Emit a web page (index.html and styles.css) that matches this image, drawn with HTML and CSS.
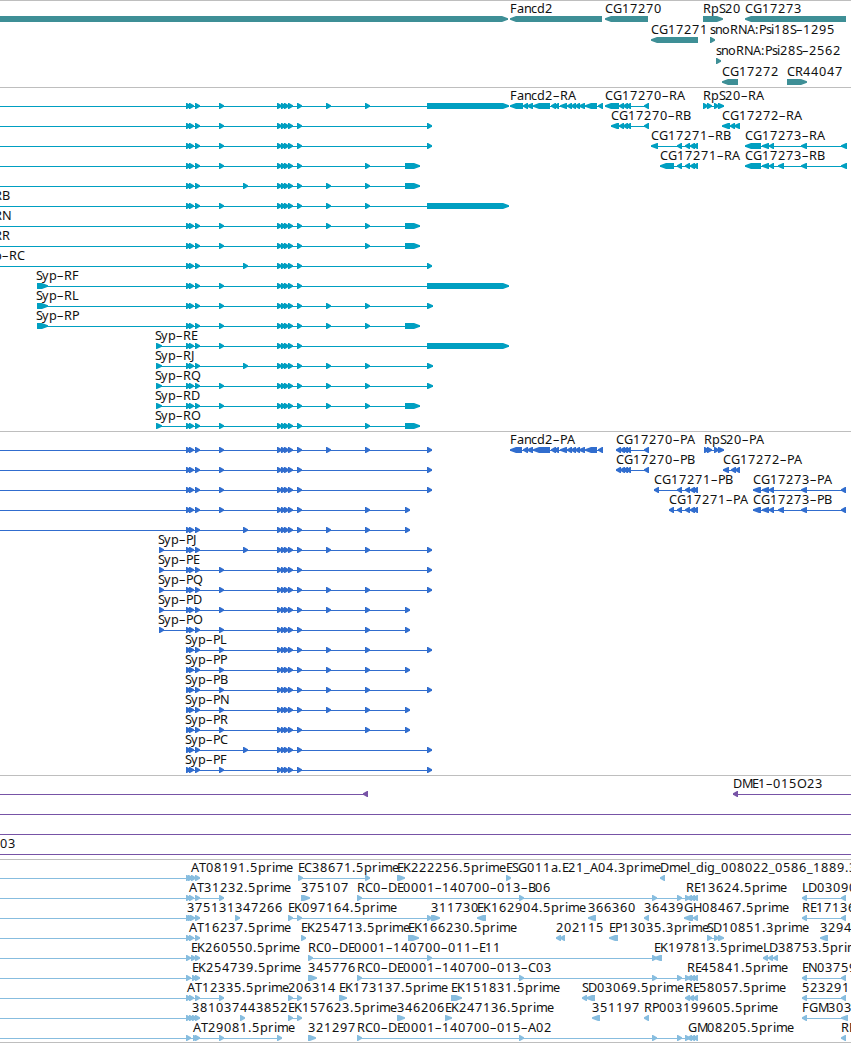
FILE: index.html
```
<!DOCTYPE html>
<html>
<head>
  <meta charset="utf-8">
  <title>Genome Browser</title>
  <link rel="stylesheet" href="styles.css">
</head>
<body>
  <div class="browser">
    <div class="track genes" id="genes"></div>
    <div class="track transcripts" id="transcripts"></div>
    <div class="track proteins" id="proteins"></div>
    <div class="track clones" id="clones"></div>
    <div class="track ests" id="ests"></div>
  </div>
  <script src="tracks.js"></script>
</body>
</html>
```

FILE: styles.css
```
body {
  margin: 0;
  background-color: #fff;
  overflow: hidden;
}

.browser {
  width: 851px;
  overflow: hidden;
}

.track {
  border-top: 1px solid #bebebe;
  padding-bottom: 3px;
}

.row {
  display: block;
  width: 851px;
  height: 20px;
  overflow: visible;
}

.row text {
  font-family: "Noto Sans", "Open Sans", sans-serif;
  font-size: 12.7px;
  fill: #111;
}

.row path {
  fill: currentColor;
}

.row rect {
  fill: currentColor;
  shape-rendering: crispEdges;
}

.genes {
  color: #3e8f96;
  padding-bottom: 2px;
}

.genes .row {
  height: 21px;
}

.transcripts {
  color: #009fc1;
}

.proteins {
  color: #316dce;
}

.clones {
  color: #7753a6;
}

.ests {
  color: #87bddf;
  padding-bottom: 2px;
  border-bottom: 1px solid #bebebe;
}
```

FILE: tracks.js
```
// Each feature is "label | label x | strand | exons".
// An exon is start-end, or only a start for the 5px minimum.
// "~" means that the feature begins left of the view.

const genes = [
  ['||>|~ 0-508', 'Fancd2|510|<|510-602', 'CG17270|605|<|605-648', 'RpS20|703|>|703-723', 'CG17273|745|<|745-846'],
  ['CG17271|651|<|651-698', 'snoRNA:Psi18S-1295|710|>|710'],
  ['snoRNA:Psi28S-2562|716|>|716'],
  ['CG17272|722|<|722-738', 'CR44047|787|>|787-807']
];

// exons shared by all Syp isoforms, with the variable ones in between
function syp(label, x, start, third, late, end) {
  return `${label}|${x}|>|${start} 186 189 195 ${third} 277 281 284 288 297 ${late} ${end}`;
}

const fancd2 = '523-528 527-533 533-550 551-556 554-559 560-567 567-572 571-576 575-580 579-585 585-597 598-603';

const transcripts = [
  [syp('', 0, '~', 219, '326 365', '427-509'), `Fancd2-RA|510|<|510-523 ${fancd2}`,
    'CG17270-RA|605|<|605-619 619-624 623-628 626-631 644', 'RpS20-RA|703|>|703 707 714 718-724'],
  [syp('', 0, '~', 219, '', 427), 'CG17270-RB|611|<|611-619 619-624 623-628 626-631 644', 'CG17272-RA|722|<|722-730 730-735 734-740'],
  [syp('', 0, '~', 219, '', 427), 'CG17271-RB|651|<|651-658 677 685 690 693', 'CG17273-RA|745|<|745-761 762-769 769-774 801-807 841-847'],
  [syp('', 0, '~', 219, 365, '405-420'), 'CG17271-RA|660|<|660-674 677 685 690 693', 'CG17273-RB|745|<|745-761 762-769 769-774 778-784 801-807 841-847'],
  [syp('', 0, '~', 243, '326 365', '405-420')],
  [syp('Syp-RB', -34, '~', 219, '326 365', '427-509')],
  [syp('Syp-RN', -34, '~', 219, '326 365', '405-420')],
  [syp('Syp-RR', -34, '~', 219, 365, '405-420')],
  [syp('Syp-RC', -19, '~', 243, '', 427)],
  [syp('Syp-RF', 36, '37-48', 219, '', '427-509')],
  [syp('Syp-RL', 36, '37-48', 219, '326 365', '427-433')],
  [syp('Syp-RP', 36, '37-48', 219, '326 365', '405-420')],
  [syp('Syp-RE', 155, '156-162', 219, '', '427-509')],
  [syp('Syp-RJ', 155, '156-162', 243, '326 365', '427-433')],
  [syp('Syp-RQ', 155, '156-162', 219, '326 365', '427-433')],
  [syp('Syp-RD', 155, '156-162', 219, '326 365', '405-420')],
  [syp('Syp-RO', 155, '156-162', 219, 365, '405-420')]
];

const proteins = [
  [syp('', 0, '~', 219, '326 365', 427), `Fancd2-PA|510|<|510-522 ${fancd2}`,
    'CG17270-PA|616|<|616 620 623 626 644', 'RpS20-PA|704|>|704 707 714 718-724'],
  [syp('', 0, '~', 219, '', 427), 'CG17270-PB|616|<|616 620 623 626 644', 'CG17272-PA|723|<|723-729 731-736 735-740'],
  [syp('', 0, '~', 219, '', 427), 'CG17271-PB|654|<|654 677 685 690 693', 'CG17273-PA|753|<|753-761 762-769 769-774 801-807 841-846'],
  [syp('', 0, '~', 219, 365, 405), 'CG17271-PA|669|<|669 677 685 690 693', 'CG17273-PB|753|<|753-761 762-769 769-774 778-784 801-807 841-846'],
  [syp('', 0, '~', 243, '326 365', 405)],
  [syp('Syp-PJ', 158, 159, 243, '326 365', 427)],
  [syp('Syp-PE', 158, 159, 219, '', 427)],
  [syp('Syp-PQ', 158, 159, 219, '326 365', 427)],
  [syp('Syp-PD', 158, 159, 219, '326 365', 405)],
  [syp('Syp-PO', 158, 159, 219, 365, 405)],
  [syp('Syp-PL', 185, '', 219, '326 365', 427)],
  [syp('Syp-PP', 185, '', 219, '326 365', 405)],
  [syp('Syp-PB', 185, '', 219, '326 365', 427)],
  [syp('Syp-PN', 185, '', 219, '326 365', 405)],
  [syp('Syp-PR', 185, '', 219, 365, 405)],
  [syp('Syp-PC', 185, '', 243, '', 427)],
  [syp('Syp-PF', 185, '', 219, '', 427)]
];

const clones = [
  ['||<|~ 363-368', 'DME1-015O23|733|<|733 900'],
  ['||<|~ 900'],
  ['||<|~ 900'],
  ['03|0|<|~ 900']
];

const ests = [
  ['||>|~ 186 188 191 195', 'AT08191.5prime|191|>|', 'EC38671.5prime|298|>|298 365', 'EK222256.5prime|397|>|397-405',
    'ESG011a.E21_A04.3prime|506|>|506', 'Dmel_dig_008022_0586_1889.3prime|660|<|660'],
  ['||>|~ 186 189 195 219', 'AT31232.5prime|189|>|', '375107|301|>|301-310',
    'RC0-DE0001-140700-013-B06|357|>|357 519 652 677 685-690', 'RE13624.5prime|686|<|687 690 693', 'LD03090.5prime|802|<|802 841'],
  ['||>|~ 186 188 190 195', '375131347266|187|>|235', 'EK097164.5prime|288|>|288 297 427', '311730|431|>|431-440',
    'EK162904.5prime|477|<|477-486', '366360|588|<|588-596', '36439|644|<|644', 'GH08467.5prime|684|<|684-693 693', 'RE17136.5prime|802|<|802 841'],
  ['||>|~ 186 189 195', 'AT16237.5prime|189|>|', 'EK254713.5prime|301|>|301', 'EK166230.5prime|408|>|408-419', '202115|556|<|556 560',
    'EP13035.3prime|609|<|609-618', 'SD10851.3prime|707|>|707 714 718-724', '329432|820|<|820-828'],
  ['||>|~ 186 191 195', 'EK260550.5prime|191|>|', 'RC0-DE0001-140700-011-E11|308|>|308 427 652', 'EK197813.5prime|654|<|654-662', 'LD38753.5prime|763|<|763 768 773'],
  ['||>|~ 186 192 195', 'EK254739.5prime|192|>|', '345776|308|>|308-317',
    'RC0-DE0001-140700-013-C03|357|>|357 519 652 677 685-690', 'RE45841.5prime|687|<|687 690 693', 'EN03759.5prime|802|<|802 841'],
  ['||>|~ 186 189 195 219', 'AT12335.5prime|187|>|', '206314|288|>|288 297', 'EK173137.5prime|339|>|339-347',
    'EK151831.5prime|451|>|451-462', 'SD03069.5prime|582|<|582 586-595', 'RE58057.5prime|685|<|685 689 693', '523291|802|<|802 841'],
  ['||>|~ 186 189 192 195', '381037443852|192|>|240', 'EK157623.5prime|288|>|288 297', '346206|397|>|397-405',
    'EK247136.5prime|445|>|445-452', '351197|592|<|592-600', 'RP003199605.5prime|644|<|644', 'FGM303.5prime|802|<|802 841-848'],
  ['||>|~ 186 193 195 219 277', 'AT29081.5prime|193|>|', '321297|308|>|308-316',
    'RC0-DE0001-140700-015-A02|357|>|357 519 652 677 685-690', 'GM08205.5prime|688|<|687 690 693', 'RE|841|<|841']
];

// label advance of each character, in whole pixels (digits are all 8)
const advance = {
  A: 8, B: 7, C: 8, D: 9, E: 6, F: 7, G: 9, H: 9, J: 4, K: 8, L: 6, M: 10, N: 9, O: 10, P: 7, Q: 10, R: 8, S: 6, T: 7,
  a: 7, c: 6, d: 8, e: 7, g: 8, i: 3, l: 3, m: 11, n: 7, o: 8, p: 8, r: 6, s: 5, y: 7, '-': 7, '.': 4, ':': 4, '_': 6
};

function drawLabel(text, x) {
  const xs = [];
  for (const c of text) {
    xs.push(x);
    x += advance[c] || 8;
  }
  // the dash is a long one in this typeface
  return `<text x="${xs.join(' ')}" y="12">${text.replace(/-/g, '–')}</text>`;
}

// blunt arrow: full height for the body, then a short head
function drawExon(start, end, strand) {
  const head = Math.min(6, end - start - 1);
  const tip = strand === '>' ? end : start;
  const back = strand === '>' ? start : end;
  const neck = strand === '>' ? end - head : start + head;
  return `<path d="M${back} 15H${neck}L${tip} 17.2V18.8L${neck} 21H${back}Z"/>`;
}

function drawFeature(feature) {
  const [label, x, strand, list] = feature.split('|');
  const parts = list.split(' ').filter(p => p);
  const offLeft = parts[0] === '~';
  if (offLeft) parts.shift();
  const exons = parts.map(p => {
    const [start, end] = p.split('-').map(Number);
    return [start, end || start + 5];
  });

  let svg = '';
  if (exons.length > 1 || offLeft) {
    const from = offLeft ? 0 : exons[0][0];
    svg += `<rect x="${from}" y="18" width="${exons[exons.length - 1][1] - from}" height="1"/>`;
  }
  svg += exons.map(e => drawExon(e[0], e[1], strand)).join('');
  if (label) svg += drawLabel(label, Number(x));
  return svg;
}

function drawTrack(id, rows) {
  document.getElementById(id).innerHTML = rows
    .map(row => `<svg class="row">${row.map(drawFeature).join('')}</svg>`)
    .join('');
}

drawTrack('genes', genes);
drawTrack('transcripts', transcripts);
drawTrack('proteins', proteins);
drawTrack('clones', clones);
drawTrack('ests', ests);
```
